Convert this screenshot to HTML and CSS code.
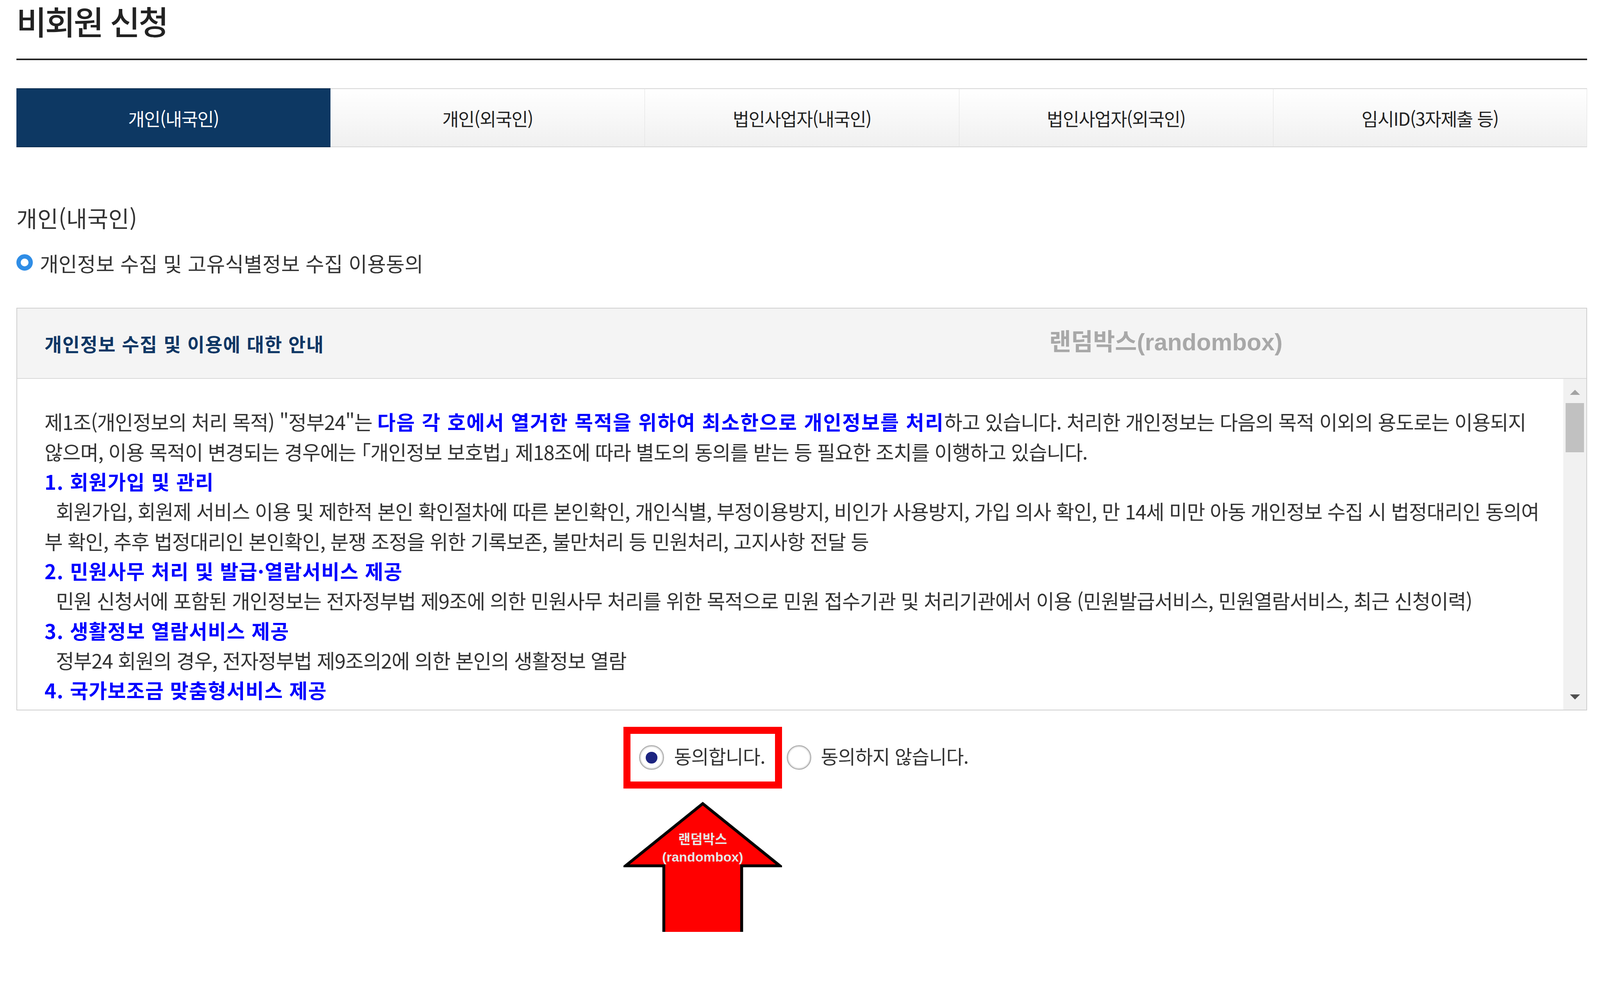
FILE: index.html
```html
<!DOCTYPE html>
<html lang="ko">
<head>
<meta charset="utf-8">
<title>비회원 신청</title>
<link rel="stylesheet" href="styles.css">
</head>
<body>
<div class="page">
  <h1 class="page-title">비회원 신청</h1>

  <ul class="tabs">
    <li class="tab active">개인(내국인)</li>
    <li class="tab">개인(외국인)</li>
    <li class="tab">법인사업자(내국인)</li>
    <li class="tab">법인사업자(외국인)</li>
    <li class="tab">임시ID(3자제출 등)</li>
  </ul>

  <h2 class="section-title">개인(내국인)</h2>
  <h3 class="bullet-title"><span class="ring"></span><span class="bullet-text">개인정보 수집 및 고유식별정보 수집 이용동의</span></h3>

  <div class="terms">
    <div class="terms-head">
      <strong class="terms-caption">개인정보 수집 및 이용에 대한 안내</strong>
      <span class="watermark">랜덤박스(randombox)</span>
    </div>
    <div class="terms-body">
      <div class="terms-text">
        <p class="lead">제1조(개인정보의 처리 목적) "정부24"는 <b class="em">다음 각 호에서 열거한 목적을 위하여 최소한으로 개인정보를 처리</b>하고 있습니다. 처리한 개인정보는 다음의 목적 이외의 용도로는 이용되지<br>않으며, 이용 목적이 변경되는 경우에는 <span class="law">「개인정보 보호법」</span> 제18조에 따라 별도의 동의를 받는 등 필요한 조치를 이행하고 있습니다.</p>
        <h4 class="item">1. 회원가입 및 관리</h4>
        <p class="desc">회원가입, 회원제 서비스 이용 및 제한적 본인 확인절차에 따른 본인확인, 개인식별, 부정이용방지, 비인가 사용방지, 가입 의사 확인, 만 14세 미만 아동 개인정보 수집 시 법정대리인 동의여<br>부 확인, 추후 법정대리인 본인확인, 분쟁 조정을 위한 기록보존, 불만처리 등 민원처리, 고지사항 전달 등</p>
        <h4 class="item">2. 민원사무 처리 및 발급·열람서비스 제공</h4>
        <p class="desc">민원 신청서에 포함된 개인정보는 전자정부법 제9조에 의한 민원사무 처리를 위한 목적으로 민원 접수기관 및 처리기관에서 이용 (민원발급서비스, 민원열람서비스, 최근 신청이력)</p>
        <h4 class="item">3. 생활정보 열람서비스 제공</h4>
        <p class="desc">정부24 회원의 경우, 전자정부법 제9조의2에 의한 본인의 생활정보 열람</p>
        <h4 class="item">4. 국가보조금 맞춤형서비스 제공</h4>
        <p class="desc">정부24 회원의 경우, 본인이 신청한 맞춤형서비스 안내</p>
      </div>
      <div class="scrollbar">
        <span class="sb-arrow sb-up"></span>
        <span class="sb-thumb"></span>
        <span class="sb-track"></span>
        <span class="sb-arrow sb-down"></span>
      </div>
    </div>
  </div>

  <div class="agree-row">
    <label class="opt opt-marked">
      <span class="radio checked"></span>
      <span class="opt-text">동의합니다.</span>
      <span class="pointer">
        <svg class="pointer-shape" width="406" height="354" viewBox="0 0 436 380">
          <polygon points="218,6 430,177 325,177 325,420 111,420 111,177 6,177" fill="#ff0000" stroke="#000000" stroke-width="8" stroke-linejoin="miter"/>
        </svg>
        <span class="pointer-label">랜덤박스<br>(randombox)</span>
      </span>
    </label>
    <label class="opt">
      <span class="radio"></span>
      <span class="opt-text">동의하지 않습니다.</span>
    </label>
  </div>
</div>
</body>
</html>
```

FILE: styles.css
```css
html, body {
  margin: 0;
  padding: 0;
  height: 2386px;
  overflow: hidden;
  background: #ffffff;
}

body {
  font-family: "Noto Sans CJK KR", "Noto Sans", sans-serif;
  color: #333333;
}

.page {
  width: 4021px;
  margin-left: 42px;
}

/* Title */
.page-title {
  margin: 0;
  font-size: 84px;
  font-weight: 500;
  letter-spacing: -4px;
  line-height: 106px;
  color: #222222;
  padding-bottom: 44px;
  border-bottom: 4.65px solid #222222;
}

/* Tabs */
.tabs {
  list-style: none;
  margin: 71.7px 0 0;
  padding: 0;
  display: grid;
  grid-template-columns: repeat(5, 1fr);
  height: 151.7px;
}

.tab {
  display: flex;
  align-items: center;
  justify-content: center;
  font-size: 46px;
  letter-spacing: -1.5px;
  color: #222222;
  background: linear-gradient(#ffffff, #f0f0f0);
  border-top: 2.8px solid #d6d6d6;
  border-bottom: 2.8px solid #d6d6d6;
  border-left: 1.86px solid #e0e0e0;
}

.tab:nth-child(2) {
  border-left: none;
}

.tab:last-child {
  border-right: 1.86px solid #e0e0e0;
}

.tab.active {
  background: #0d3863;
  color: #ffffff;
  border-top-color: #0a2b4e;
  border-bottom-color: #0a2b4e;
  border-left: none;
}

/* Section headings */
.section-title {
  margin: 137.6px 0 0;
  font-size: 58px;
  font-weight: 400;
  letter-spacing: 0.5px;
  line-height: 84px;
  color: #333333;
}

.bullet-title {
  margin: 37.4px 0 0;
  display: flex;
  align-items: center;
  font-size: 52px;
  font-weight: 400;
  line-height: 76px;
  color: #333333;
}

.ring {
  flex-shrink: 0;
  width: 41.9px;
  height: 41.9px;
  box-sizing: border-box;
  border: 11.2px solid #2f8de6;
  border-radius: 50%;
  margin-right: 18px;
  margin-top: -4.7px;
}

/* Terms box */
.terms {
  margin-top: 75.6px;
  border: 2.8px solid #cfcfcf;
}

.terms-head {
  position: relative;
  height: 177.8px;
  background: #f4f4f4;
  border-bottom: 2.8px solid #d9d9d9;
  display: flex;
  align-items: center;
  padding-left: 70px;
}

.terms-caption {
  font-size: 48px;
  font-weight: 700;
  letter-spacing: 1.6px;
  color: #0e3765;
}

.watermark {
  position: absolute;
  left: 2642px;
  top: 51px;
  font-family: "Liberation Sans", "Noto Sans CJK KR", sans-serif;
  font-size: 61px;
  font-weight: 700;
  line-height: 70px;
  color: #a8a8a8;
  white-space: nowrap;
}

.terms-body {
  display: flex;
  height: 847px;
  background: #ffffff;
}

.terms-text {
  flex: 1;
  overflow: hidden;
  padding: 71.7px 18.6px 0 70px;
  font-size: 51px;
  letter-spacing: -1.2px;
  line-height: 76.3px;
  color: #333333;
}

.terms-text p,
.terms-text h4 {
  margin: 0;
  white-space: nowrap;
}

.em {
  color: #0000ff;
  font-weight: 700;
  letter-spacing: 2px;
}

.law {
  font-feature-settings: "halt";
}

.item {
  font-size: 51px;
  font-weight: 700;
  letter-spacing: 1.3px;
  line-height: 76.3px;
  color: #0000ff;
}

.desc {
  text-indent: 28.9px;
}

/* Fake scrollbar */
.scrollbar {
  width: 58.6px;
  background: #f1f1f1;
  display: flex;
  flex-direction: column;
  align-items: center;
}

.sb-arrow {
  width: 0;
  height: 0;
  border-left: 13px solid transparent;
  border-right: 13px solid transparent;
}

.sb-up {
  margin-top: 27.9px;
  border-bottom: 13px solid #a3a3a3;
}

.sb-thumb {
  margin-top: 21.4px;
  width: 47.5px;
  height: 125.7px;
  background: #c1c1c1;
}

.sb-track {
  flex: 1;
}

.sb-down {
  margin-bottom: 26px;
  border-top: 13px solid #505050;
}

/* Agree row */
.agree-row {
  margin-top: 41.9px;
  display: flex;
  justify-content: center;
  align-items: center;
  padding-right: 29.8px;
  font-size: 49px;
  letter-spacing: -1px;
  color: #333333;
}

.opt {
  position: relative;
  display: flex;
  align-items: center;
  height: 122px;
  margin-left: 12.1px;
}

.opt-marked {
  margin-left: 0;
  border: 18.6px solid #ff0000;
  padding: 0 25.1px 0 22.3px;
}

.radio {
  width: 63.3px;
  height: 63.3px;
  box-sizing: border-box;
  border: 3.7px solid #b3b3b3;
  border-radius: 50%;
  background: #ffffff;
  box-shadow: inset 0 0 0 2.8px #ececec;
  margin-right: 24.2px;
  display: flex;
  align-items: center;
  justify-content: center;
  flex-shrink: 0;
}

.radio.checked::after {
  content: "";
  width: 29.8px;
  height: 29.8px;
  border-radius: 50%;
  background: #1c2480;
}

.opt-text {
  margin-top: -11.2px;
}

.opt-marked .radio {
  margin-right: 26px;
}

/* Annotation arrow */
.pointer {
  position: absolute;
  top: calc(100% + 51.2px);
  left: 50%;
  width: 406px;
  height: 354px;
  transform: translateX(-50%);
}

.pointer-shape {
  display: block;
}

.pointer-label {
  position: absolute;
  top: 75.4px;
  left: 0;
  width: 100%;
  text-align: center;
  font-family: "Liberation Sans", "Noto Sans CJK KR", sans-serif;
  font-size: 34px;
  font-weight: 700;
  letter-spacing: 0;
  line-height: 44.7px;
  color: #e6e6e6;
}
```
